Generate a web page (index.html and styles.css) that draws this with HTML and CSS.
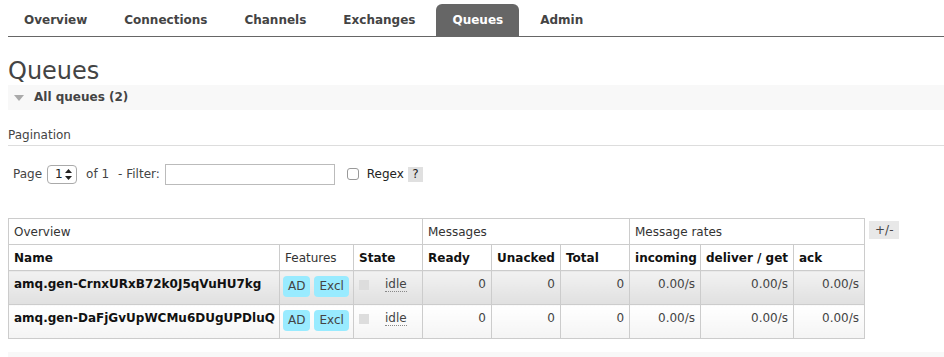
FILE: index.html
```html
<!DOCTYPE html>
<html lang="en">
<head>
    <meta charset="UTF-8">
    <meta name="viewport" content="width=device-width, initial-scale=1.0">
    <title>Queues</title>
    <link rel="stylesheet" href="styles.css">
</head>
<body>

    <ul class="tabs">
        <li><a href="#">Overview</a></li>
        <li><a href="#">Connections</a></li>
        <li><a href="#">Channels</a></li>
        <li><a href="#">Exchanges</a></li>
        <li class="selected"><a href="#">Queues</a></li>
        <li><a href="#">Admin</a></li>
    </ul>

    <h1>Queues</h1>

    <div class="section">
        <h2><span class="arrow"></span>All queues (2)</h2>
    </div>

    <div class="pagination">
        <h3>Pagination</h3>
        <div class="filter">
            <span>Page</span>
            <span class="select-wrap">
                <select class="page-select">
                    <option>1</option>
                </select>
                <svg class="select-arrows" width="7" height="11" viewBox="0 0 7 11">
                    <path d="M3.5 0 L7 4 L0 4 Z M3.5 11 L7 7 L0 7 Z" fill="#222"/>
                </svg>
            </span>
            <span class="of">of 1</span>
            <span class="filter-label">- Filter:</span>
            <input type="text" class="filter-input">
            <input type="checkbox" class="regex-check">
            <span class="regex">Regex</span>
            <span class="help">?</span>
        </div>
    </div>

    <div class="table-wrap">
        <table class="list">
            <colgroup>
                <col class="c-name">
                <col class="c-features">
                <col class="c-state">
                <col class="c-num">
                <col class="c-num">
                <col class="c-num">
                <col class="c-incoming">
                <col class="c-deliver">
                <col class="c-ack">
            </colgroup>
            <thead>
                <tr class="group">
                    <th colspan="3">Overview</th>
                    <th colspan="3">Messages</th>
                    <th colspan="3">Message rates</th>
                </tr>
                <tr>
                    <th>Name</th>
                    <th class="plain">Features</th>
                    <th>State</th>
                    <th>Ready</th>
                    <th>Unacked</th>
                    <th>Total</th>
                    <th>incoming</th>
                    <th>deliver / get</th>
                    <th>ack</th>
                </tr>
            </thead>
            <tbody id="rows"></tbody>
        </table>
        <span class="toggle">+/-</span>
    </div>

    <div class="section bottom"></div>

    <script>
        const queues = [
            { name: "amq.gen-CrnxURxB72k0J5qVuHU7kg", cls: "alt1" },
            { name: "amq.gen-DaFjGvUpWCMu6DUgUPDluQ", cls: "alt2" }
        ];

        let rowsHTML = "";
        queues.forEach(q => {
            rowsHTML += `
                <tr class="${q.cls}">
                    <td class="name">${q.name}</td>
                    <td><span class="badge">AD</span><span class="badge">Excl</span></td>
                    <td><span class="state-box"></span><abbr class="state">idle</abbr></td>
                    <td class="r">0</td>
                    <td class="r">0</td>
                    <td class="r">0</td>
                    <td class="r">0.00/s</td>
                    <td class="r">0.00/s</td>
                    <td class="r">0.00/s</td>
                </tr>
            `;
        });
        document.getElementById("rows").innerHTML = rowsHTML;
    </script>
</body>
</html>
```

FILE: styles.css
```css
body {
    font-family: "DejaVu Sans", Verdana, sans-serif;
    font-size: 12px;
    color: #444;
    margin: 0;
    padding-left: 8px;
    background: #fff;
    overflow: hidden;
}
.tabs {
    display: flex;
    list-style: none;
    margin: 4px 0 0 0;
    padding: 0;
    border-bottom: 1px solid #666;
}
.tabs li {
    margin-right: 5px;
    border-radius: 6px 6px 0 0;
}
.tabs a {
    display: block;
    padding: 0 16px;
    height: 32px;
    line-height: 32px;
    font-weight: bold;
    color: #444;
    text-decoration: none;
}
.tabs li.selected {
    background-color: #666;
}
.tabs li.selected a {
    color: #fff;
}
h1 {
    font-size: 24px;
    font-weight: normal;
    color: #444;
    margin: 20px 0 0 0;
    line-height: 28px;
}
.section {
    background-color: #f8f8f8;
    height: 25px;
}
.section h2 {
    margin: 0;
    font-size: 12px;
    font-weight: bold;
    line-height: 25px;
    color: #444;
    display: flex;
    align-items: center;
}
.arrow {
    width: 0;
    height: 0;
    border-left: 5px solid transparent;
    border-right: 5px solid transparent;
    border-top: 6px solid #aaa;
    margin: 1px 10px 0 6px;
}
.pagination h3 {
    margin: 17px 0 0 0;
    font-size: 12px;
    font-weight: normal;
    line-height: 17px;
    padding-bottom: 1px;
    border-bottom: 1px solid #ddd;
}
.filter {
    display: flex;
    align-items: center;
    margin-top: 17px;
    padding-left: 5px;
    height: 22px;
}
.select-wrap {
    position: relative;
    margin-left: 5px;
}
.page-select {
    appearance: none;
    -webkit-appearance: none;
    width: 30px;
    height: 19px;
    border: 1px solid #aaa;
    border-radius: 4px;
    background: #fff;
    font-family: inherit;
    font-size: 12px;
    color: #222;
    padding: 0 0 0 7px;
    display: block;
}
.select-arrows {
    position: absolute;
    right: 5px;
    top: 4px;
}
.of {
    margin-left: 9px;
}
.filter-label {
    margin-left: 9px;
}
.filter-input {
    width: 170px;
    height: 21px;
    box-sizing: border-box;
    border: 1px solid #bbb;
    margin: 0 0 0 5px;
    padding: 0;
}
.regex-check {
    appearance: none;
    -webkit-appearance: none;
    width: 12px;
    height: 12px;
    border: 1px solid #999;
    border-radius: 3px;
    margin: 0 0 0 12px;
    background: #fff;
}
.regex {
    margin-left: 8px;
    color: #222;
}
.help {
    background-color: #e0e0e0;
    width: 15px;
    height: 15px;
    line-height: 15px;
    text-align: center;
    margin-left: 4px;
    margin-top: 1px;
    color: #222;
}
.table-wrap {
    display: flex;
    align-items: flex-start;
    margin-top: 33px;
}
.list {
    border-collapse: collapse;
    table-layout: fixed;
    width: 856px;
}
.c-name { width: 271px; }
.c-features { width: 74px; }
.c-state { width: 69px; }
.c-num { width: 69px; }
.c-incoming { width: 71px; }
.c-deliver { width: 93px; }
.c-ack { width: 71px; }
.list th, .list td {
    border: 1px solid #ccc;
    padding: 0 5px;
    text-align: left;
    white-space: nowrap;
}
.list th {
    height: 25px;
    font-weight: bold;
    color: #111;
    background: #fff;
}
.list tr.group th,
.list th.plain {
    font-weight: normal;
    color: #333;
}
.list td {
    height: 34px;
    vertical-align: top;
    padding-top: 6px;
    box-sizing: border-box;
    color: #444;
}
.list td.name {
    font-weight: bold;
    color: #111;
}
.list td.r {
    text-align: right;
}
tr.alt1 td {
    background: linear-gradient(#f2f2f2, #e0e0e0);
}
tr.alt2 td {
    background: linear-gradient(#fff, #f4f4f4);
}
.list td:nth-child(2) {
    padding-top: 5px;
    padding-left: 3px;
}
.badge {
    display: inline-block;
    background-color: #99ebff;
    border-radius: 4px;
    padding: 3px 5px;
    line-height: 15px;
    margin-right: 4px;
    color: #444;
}
.state-box {
    display: inline-block;
    width: 10px;
    height: 10px;
    background-color: #ddd;
    margin: 3px 0 0 0;
    vertical-align: top;
}
.state {
    margin-left: 16px;
    text-decoration: none;
    border-bottom: 1px dotted #888;
}
.toggle {
    background-color: #e8e8e8;
    padding: 0 6px;
    height: 18px;
    line-height: 18px;
    margin: 3px 0 0 4px;
    color: #444;
}
.section.bottom {
    margin-top: 13px;
}
```
